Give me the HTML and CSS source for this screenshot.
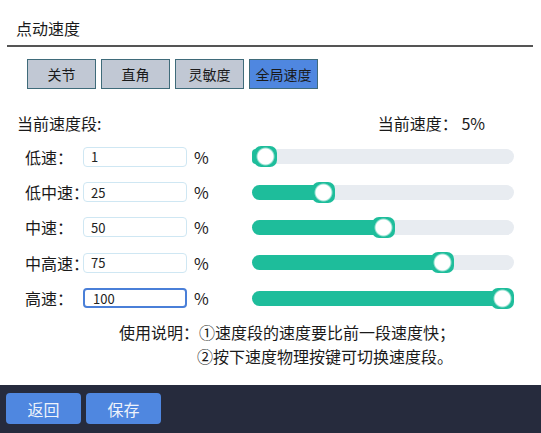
FILE: index.html
```html
<!DOCTYPE html>
<html lang="zh-CN">
<head>
<meta charset="utf-8">
<title>点动速度</title>
<link rel="stylesheet" href="styles.css">
</head>
<body>
<div class="page">
  <div class="main">
    <div class="header"><span class="title">点动速度</span></div>
    <div class="tabs">
      <button class="tab">关节</button>
      <button class="tab">直角</button>
      <button class="tab">灵敏度</button>
      <button class="tab active">全局速度</button>
    </div>
    <div class="current">
      <span>当前速度段:</span>
      <span>当前速度： 5%</span>
    </div>
    <div class="rows">
      <div class="row">
        <span class="label">低速：</span>
        <input class="num" value="1">
        <span class="pct">%</span>
        <div class="track"><div class="fill" style="width:3%"></div><div class="thumb" style="left:calc((100% - 23px) * 0.01)"></div></div>
      </div>
      <div class="row">
        <span class="label">低中速：</span>
        <input class="num" value="25">
        <span class="pct">%</span>
        <div class="track"><div class="fill" style="width:28%"></div><div class="thumb" style="left:calc((100% - 23px) * 0.25)"></div></div>
      </div>
      <div class="row">
        <span class="label">中速：</span>
        <input class="num" value="50">
        <span class="pct">%</span>
        <div class="track"><div class="fill" style="width:52%"></div><div class="thumb" style="left:calc((100% - 23px) * 0.5)"></div></div>
      </div>
      <div class="row">
        <span class="label">中高速：</span>
        <input class="num" value="75">
        <span class="pct">%</span>
        <div class="track"><div class="fill" style="width:76%"></div><div class="thumb" style="left:calc((100% - 23px) * 0.75)"></div></div>
      </div>
      <div class="row">
        <span class="label">高速：</span>
        <input class="num focused" value="100">
        <span class="pct">%</span>
        <div class="track"><div class="fill" style="width:100%"></div><div class="thumb" style="left:calc(100% - 23px)"></div></div>
      </div>
    </div>
    <div class="notes">
      <div>使用说明：①速度段的速度要比前一段速度快；</div>
      <div class="indent">②按下速度物理按键可切换速度段。</div>
    </div>
  </div>
  <div class="footer">
    <button class="fbtn">返回</button>
    <button class="fbtn">保存</button>
  </div>
</div>
</body>
</html>
```
FILE: styles.css
```css
* { box-sizing: border-box; }
html, body { margin: 0; padding: 0; }
body {
  width: 541px;
  height: 433px;
  overflow: hidden;
  background: #fff;
  font-family: "Noto Sans CJK SC", "Noto Sans", sans-serif;
  color: #1a1a1a;
}
.page {
  display: flex;
  flex-direction: column;
  height: 433px;
}
.main { flex: 1; }
.header {
  margin: 0 8px 0 7px;
  padding: 16px 0 0 9px;
  height: 47px;
  border-bottom: 2px solid #555;
  font-size: 16px;
  line-height: 24px;
}
.tabs {
  display: flex;
  gap: 5px;
  margin-top: 12px;
  padding-left: 27px;
}
.tab {
  width: 69px;
  height: 30px;
  padding: 0;
  background: #c1c8d4;
  border: 1px solid #3f6b7a;
  font-family: inherit;
  font-size: 14px;
  color: #1a1a1a;
}
.tab.active { background: #4f87e0; }
.current {
  display: flex;
  justify-content: space-between;
  margin-top: 23px;
  padding: 0 56px 0 17px;
  font-size: 16px;
  line-height: 22px;
}
.rows { margin-top: 5px; }
.row {
  display: flex;
  align-items: center;
  height: 35.4px;
  padding-left: 25px;
}
.label {
  width: 58px;
  flex-shrink: 0;
  white-space: nowrap;
  font-size: 16px;
}
.num {
  width: 104px;
  height: 20px;
  flex-shrink: 0;
  border: 1px solid #cfe7f3;
  border-radius: 4px;
  padding: 0 0 0 7px;
  font-family: inherit;
  font-size: 13px;
  color: #222;
  outline: none;
}
.num.focused {
  border: 2px solid #4a7fd8;
  padding-left: 8px;
}
.pct {
  width: 65px;
  flex-shrink: 0;
  padding-left: 7px;
  font-size: 16px;
}
.track {
  position: relative;
  width: 262px;
  height: 15px;
  border-radius: 8px;
  background: #e8ecf1;
}
.fill {
  height: 15px;
  border-radius: 8px;
  background: #1ebd9b;
}
.thumb {
  position: absolute;
  top: -3px;
  width: 23px;
  height: 21px;
  border-radius: 7px;
  background: radial-gradient(circle at 50% 50%, #fff 0, #fff 7.5px, #1ebd9b 9.5px);
}
.notes {
  margin-top: 4px;
  padding-left: 119px;
  font-size: 16px;
  line-height: 24px;
}
.indent { padding-left: 78px; }
.footer {
  height: 48px;
  background: #262b3d;
  display: flex;
  gap: 5px;
  padding: 8px 0 0 6px;
}
.fbtn {
  width: 75px;
  height: 31px;
  border: none;
  border-radius: 4px;
  background: #4f87e0;
  color: #eef3fb;
  font-family: inherit;
  font-size: 16px;
  padding: 0;
}
```
